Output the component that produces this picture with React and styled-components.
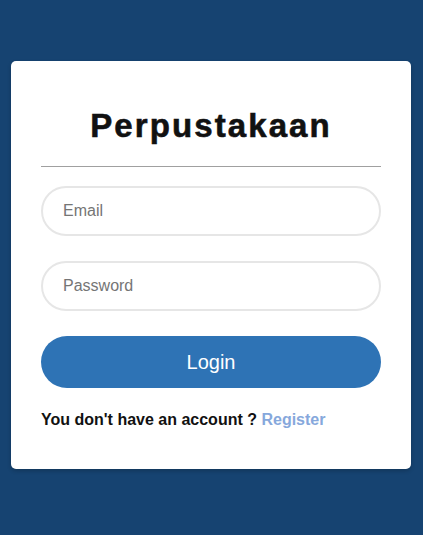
import React from 'react';
import styled, { createGlobalStyle } from 'styled-components';

const GlobalStyle = createGlobalStyle`
    html, body {
        margin: 0;
        padding: 0;
        background: #164371;
        font-family: "Liberation Sans", Arial, sans-serif;
    }
`
const Page = styled.div`
    min-height: 535px;
    display: flex;
    padding: 61px 12px 0 11px;
    box-sizing: border-box;
`
const Card = styled.form`
    width: 400px;
    background: #ffffff;
    border-radius: 5px;
    padding: 0 30px 40px;
    box-sizing: border-box;
    align-self: flex-start;
    box-shadow: 0 2px 4px rgba(0, 0, 0, 0.2);
`
const Title = styled.h1`
    margin: 0;
    padding-top: 46px;
    font-size: 33px;
    line-height: 37px;
    letter-spacing: 2.1px;
    font-weight: bold;
    text-align: center;
    color: #111;
    -webkit-text-stroke: 0.6px #111;
`
const Divider = styled.hr`
    margin: 22px 0 19px;
    border: none;
    border-top: 1px solid #a0a0a0;
`
const Field = styled.input`
    display: block;
    width: 100%;
    height: 50px;
    box-sizing: border-box;
    margin-bottom: 25px;
    padding: 0 20px;
    border: 2px solid #e6e6e6;
    border-radius: 25px;
    font-family: inherit;
    font-size: 16px;
    outline: none;
    &::placeholder {
        color: #757575;
    }
`
const LoginButton = styled.button`
    display: block;
    width: 100%;
    height: 52px;
    border: none;
    border-radius: 26px;
    background: #2e73b5;
    color: #fff;
    font-family: inherit;
    font-size: 20px;
    cursor: pointer;
`
const Footer = styled.p`
    margin: 23px 0 0;
    font-size: 16px;
    font-weight: bold;
    color: #111;
`
const RegisterLink = styled.a`
    color: #86a8dc;
    text-decoration: none;
`

const App = () => (
    <Page>
        <GlobalStyle />
        <Card onSubmit={e => e.preventDefault()}>
            <Title>Perpustakaan</Title>
            <Divider />
            <Field type='email' placeholder='Email' />
            <Field type='password' placeholder='Password' />
            <LoginButton type='submit'>Login</LoginButton>
            <Footer>
                You don't have an account ? <RegisterLink href='#'>Register</RegisterLink>
            </Footer>
        </Card>
    </Page>
)

export default App;
